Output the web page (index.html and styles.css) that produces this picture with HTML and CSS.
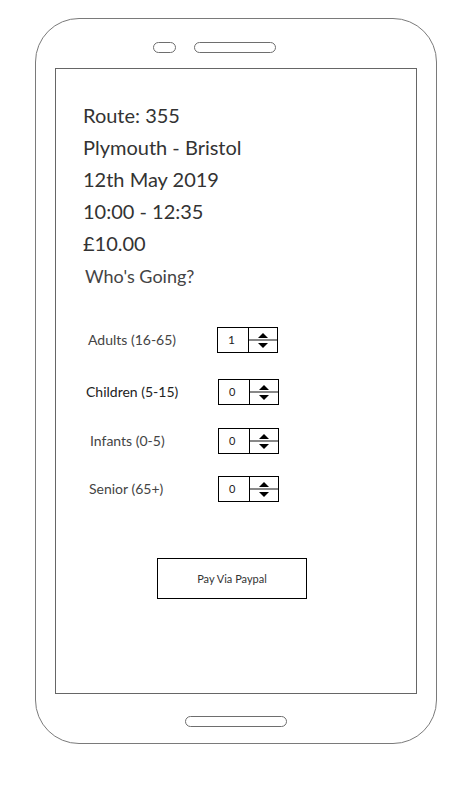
FILE: index.html
```html
<!DOCTYPE html>
<html>
<head>
<meta charset="utf-8">
<link rel="stylesheet" href="styles.css">
</head>
<body>
<div class="phone">
  <div class="sensors">
    <span class="camera"></span>
    <span class="speaker"></span>
  </div>
  <div class="screen">
    <div class="info">
      <div class="line">Route: 355</div>
      <div class="line">Plymouth - Bristol</div>
      <div class="line">12th May 2019</div>
      <div class="line">10:00 - 12:35</div>
      <div class="line">£10.00</div>
      <div class="who">Who's Going?</div>
    </div>
    <div class="rows">
      <div class="row r1"><span class="label">Adults (16-65)</span><div class="spin"><span class="val">1</span><span class="arrows"><span class="up"></span><span class="down"></span></span></div></div>
      <div class="row r2"><span class="label">Children (5-15)</span><div class="spin"><span class="val">0</span><span class="arrows"><span class="up"></span><span class="down"></span></span></div></div>
      <div class="row r3"><span class="label">Infants (0-5)</span><div class="spin"><span class="val">0</span><span class="arrows"><span class="up"></span><span class="down"></span></span></div></div>
      <div class="row r4"><span class="label">Senior (65+)</span><div class="spin"><span class="val">0</span><span class="arrows"><span class="up"></span><span class="down"></span></span></div></div>
    </div>
    <div class="pay">Pay Via Paypal</div>
  </div>
  <div class="home"></div>
</div>
</body>
</html>
```
FILE: styles.css
```css
html, body { margin: 0; padding: 0; background: #fff; }
body { font-family: "Source Sans Pro", Lato, "Open Sans", sans-serif; color: #333; }
.phone {
  box-sizing: border-box;
  margin: 18px 0 0 35px;
  width: 402px;
  height: 726px;
  border: 1px solid #7a7a7a;
  border-radius: 44px;
  display: flex;
  flex-direction: column;
  align-items: center;
}
.sensors {
  display: flex;
  gap: 18px;
  margin: 23px 0 0 -44px;
  height: 11px;
}
.camera, .speaker {
  box-sizing: border-box;
  display: block;
  height: 11px;
  border: 1px solid #6e6e6e;
  border-radius: 6px;
}
.camera { width: 23px; }
.speaker { width: 82px; }
.screen {
  box-sizing: border-box;
  margin-top: 15px;
  width: 362px;
  height: 626px;
  border: 1px solid #666;
  padding: 30px 0 0 0;
}
.info { padding-left: 27px; }
.line { font-size: 20px; line-height: 32px; color: #333; }
.who { font-size: 18px; line-height: 32px; color: #444; padding-left: 2px; margin-top: 1px; }
.rows { margin-top: 35px; }
.row { display: flex; align-items: center; height: 25px; }
.label { font-size: 14px; color: #444; width: 161px; box-sizing: border-box; }
.r1 .label { padding-left: 32px; width: 161px; }
.r2 { margin-top: 27px; }
.r2 .label { padding-left: 30px; width: 162px; color: #222; }
.r3 { margin-top: 24px; }
.r3 .label { padding-left: 34px; width: 162px; }
.r4 { margin-top: 23px; }
.r4 .label { padding-left: 33px; width: 162px; }
.spin {
  box-sizing: border-box;
  display: flex;
  width: 61px;
  height: 26px;
  border: 1px solid #000;
}
.val {
  box-sizing: border-box;
  width: 31px;
  border-right: 1px solid #000;
  font-size: 11px;
  color: #222;
  padding-left: 10px;
  line-height: 24px;
}
.r1 .val { font-size: 12px; }
.arrows {
  flex: 1;
  display: flex;
  flex-direction: column;
  align-items: center;
  justify-content: space-between;
  padding: 5px 0 4px;
  background: linear-gradient(#fff 11px, #888 11px, #888 13px, #fff 13px);
}
.up {
  width: 0; height: 0;
  border-left: 5px solid transparent;
  border-right: 5px solid transparent;
  border-bottom: 5px solid #000;
}
.down {
  width: 0; height: 0;
  border-left: 5px solid transparent;
  border-right: 5px solid transparent;
  border-top: 5px solid #000;
}
.pay {
  box-sizing: border-box;
  margin: 57px 0 0 101px;
  width: 150px;
  height: 41px;
  border: 1px solid #000;
  font-size: 11px;
  color: #333;
  display: flex;
  align-items: center;
  justify-content: center;
}
.home {
  box-sizing: border-box;
  margin-top: 22px;
  width: 102px;
  height: 11px;
  border: 1px solid #6e6e6e;
  border-radius: 6px;
}
```
